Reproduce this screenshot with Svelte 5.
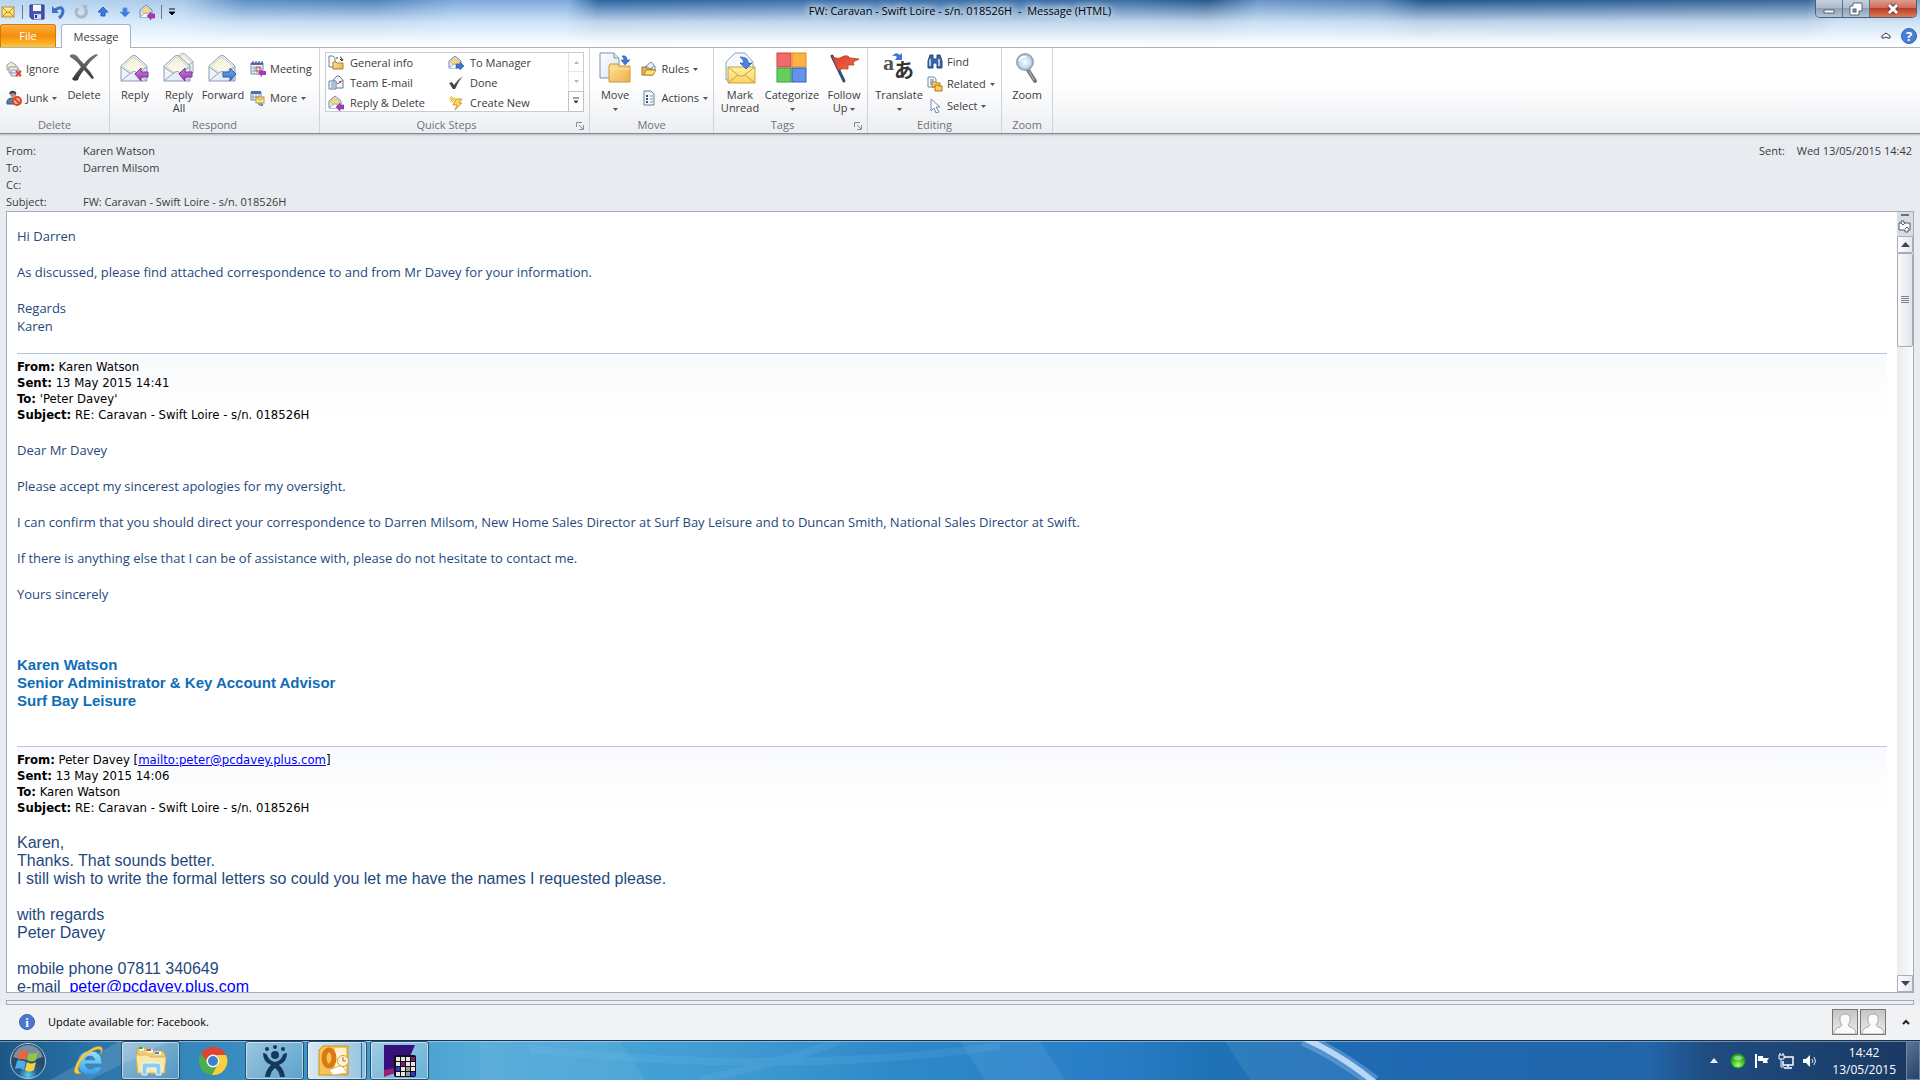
<script lang="ts">
  type Step = { icon: string; label: string };

  const quickSteps: Step[] = [
    { icon: 'general', label: 'General info' },
    { icon: 'to-manager', label: 'To Manager' },
    { icon: 'team', label: 'Team E-mail' },
    { icon: 'done', label: 'Done' },
    { icon: 'reply-delete', label: 'Reply & Delete' },
    { icon: 'create', label: 'Create New' },
  ];

  const headers = [
    ['From:', 'Karen Watson'],
    ['To:', 'Darren Milsom'],
    ['Cc:', ''],
    ['Subject:', 'FW: Caravan - Swift Loire - s/n. 018526H'],
  ];
</script>

{#snippet envelope()}
  <path d="M1 12 L12 2 Q14 1 16 2 L27 12 V27 H1Z" fill="url(#paper)" stroke="#8a9bb0" />
  <path d="M3 13 L12 4 Q14 3 16 4 L25 13 L14 20Z" fill="url(#cream)" stroke="#c3c3b4" stroke-width=".7" />
  <path d="M1 13 L11 20 M27 13 L17 20 M1 27 L12 18 Q14 17 16 18 L27 27" fill="none" stroke="#93a5b9" />
{/snippet}

{#snippet smallEnvelope()}
  <path d="M1 6 L7 1 L13 6 V13 H1Z" fill="#e3edf8" stroke="#6d88ad" />
  <path d="M3 6 L7 3 L11 6 V8 L7 10 L3 8Z" fill="#f9d985" stroke="#d8ad45" stroke-width=".6" />
  <path d="M1 13 L6 9 H8 L13 13" fill="#f5f9fe" stroke="#7d96b8" stroke-width=".8" />
{/snippet}

{#snippet caret()}
  <svg class="caret" viewBox="0 0 5 3" aria-hidden="true"><path d="M0 0H5L2.5 3Z" fill="#555" /></svg>
{/snippet}

{#snippet large(name: string)}
  <svg class="icon32" viewBox="0 0 32 32" aria-hidden="true">
    {#if name === 'delete'}
      <path d="M2 3 Q6 1 9 4 Q12 8 16 12 Q21 5 28 2 L30 3 Q23 8 18 15 Q23 20 26 26 L24 27 Q20 22 16 18 Q11 24 10 28 Q6 30 4 27 Q8 21 13 15 Q8 8 2 5Z" fill="url(#dark)" />
    {:else if name === 'reply'}
      <g transform="translate(1 2)">{@render envelope()}</g>
      <path d="M16 22 L22 16 V20 H29 V25 H22 V29Z" fill="url(#purple)" stroke="#7c3796" />
    {:else if name === 'reply-all'}
      <g transform="translate(9 0) scale(.78)">{@render envelope()}</g>
      <g transform="translate(0 2)">{@render envelope()}</g>
      <path d="M16 22 L22 16 V20 H29 V25 H22 V29Z" fill="url(#purple)" stroke="#7c3796" />
    {:else if name === 'forward'}
      <g transform="translate(1 2)">{@render envelope()}</g>
      <path d="M29 22 L23 16 V20 H16 V25 H23 V29Z" fill="url(#blue)" stroke="#315ca9" />
    {:else if name === 'move'}
      <path d="M1 1 H15 L20 6 V26 H1Z" fill="url(#paper)" stroke="#7c91ad" />
      <path d="M15 1 V6 H20" fill="#dce7f3" stroke="#7c91ad" />
      <path d="M10 14 L11 12 H19 L20 14 H31 V30 H10Z" fill="url(#gold)" stroke="#c99638" />
      <path d="M10 17 H31" stroke="#ffe7a3" />
      <path d="M23 4 Q28 3 28 8 H31 L26 13 L22 8 H25 Q25 6 23 4Z" fill="#3f78d0" stroke="#285aae" stroke-width=".6" />
    {:else if name === 'unread'}
      <path d="M2 10 L11 1 H21 L29 10 V28 H2Z" fill="#f5f9fd" stroke="#8ba1bd" />
      <path d="M4 15 H31 V31 H4Z" fill="url(#yellow)" stroke="#c9a13d" />
      <path d="M4 15 L15 24 H19 L31 15 M4 31 L14 23 M31 31 L21 23" fill="none" stroke="#c9a13d" />
      <path d="M16 5 Q25 5 24 11 H28 L22 17 L16 11 H20 Q20 8 16 5Z" fill="#4a83da" stroke="#2458ac" stroke-width=".7" />
    {:else if name === 'categorize'}
      <rect x="1" y="1" width="14" height="14" fill="#f2696c" stroke="#d23f44" />
      <rect x="16" y="1" width="14" height="14" fill="#fbb343" stroke="#dd8d24" />
      <rect x="1" y="16" width="14" height="14" fill="#65cf5c" stroke="#36a437" />
      <rect x="16" y="16" width="14" height="14" fill="#6592ea" stroke="#365fbe" />
    {:else if name === 'flag'}
      <path d="M4 4 L16 29" stroke="#33547f" stroke-width="3" stroke-linecap="round" />
      <path d="M4 4 Q9 8 14 5 Q19 2 22 6 L31 7 L25 10 L26 13 L20 13 L20 17 Q15 16 10 18Z" fill="url(#red)" stroke="#b83823" stroke-width=".8" />
    {:else if name === 'translate'}
      <text x="0" y="18" font-family="Liberation Serif, serif" font-size="22" font-weight="bold" fill="#555">a</text>
      <text x="11" y="26" font-family="Noto Sans CJK JP, sans-serif" font-size="20" font-weight="bold" fill="#333">あ</text>
      <path d="M9 4 Q13 -1 17 3 L19 1 V8 H12 L14 5 Q12 3 9 4Z" fill="#3d75cf" />
    {:else if name === 'zoom'}
      <path d="M17 18 L24 29" stroke="#777" stroke-width="4" stroke-linecap="round" />
      <path d="M18 19 L23 28" stroke="#c3c3c3" />
      <circle cx="14" cy="10" r="8" fill="url(#lens)" stroke="#9da8b5" stroke-width="2" />
      <path d="M8 9 Q10 4 15 5" fill="none" stroke="#fff" stroke-width="2" />
    {/if}
  </svg>
{/snippet}

{#snippet small(name: string)}
  <svg class="icon16" viewBox="0 0 16 16" aria-hidden="true">
    {#if name === 'ignore'}
      <path d="M1 4 L5 1 L10 4 V9 H1Z" fill="#f5ecd1" stroke="#aaa28c" />
      <path d="M3 6 H12 V12 H3Z M5 9 H14 V15 H5Z" fill="#eaf0f5" stroke="#8999a8" />
      <path d="M10 10 L15 15 M15 10 L10 15" stroke="#e14735" stroke-width="2" />
    {:else if name === 'junk'}
      <circle cx="7" cy="4" r="3" fill="#b78b69" />
      <path d="M3 4 Q4 0 8 1 Q11 2 10 5 L8 3Z" fill="#34465d" />
      <path d="M1 14 V11 Q2 8 6 8 Q10 8 11 11 V14Z" fill="#587cac" stroke="#37557d" />
      <circle cx="11" cy="11" r="4" fill="#f7b49e" stroke="#dc4629" stroke-width="2" />
      <path d="M8 8 L14 14" stroke="#dc4629" stroke-width="2" />
    {:else if name === 'meeting'}
      <path d="M1 2 H13 V13 H1Z" fill="#f8fafd" stroke="#7187aa" />
      <path d="M1 2 H13 V4 H1Z" fill="#4c72b2" />
      <path d="M3 0 V3 M6 0 V3 M9 0 V3 M12 0 V3" stroke="#334d7b" />
      <path d="M4 5 V13 M7 5 V13 M10 5 V13 M1 7 H13 M1 10 H13" stroke="#9bacc6" />
      <rect x="6" y="6" width="4" height="4" fill="none" stroke="#df5146" />
      <path d="M8 12 L12 8 V10 H16 V14 H12 V16Z" fill="#a339be" />
    {:else if name === 'more'}
      <path d="M1 2 H11 V10 H1Z" fill="#f8fafd" stroke="#7187aa" />
      <path d="M1 1 H11 V4 H1Z" fill="#4c72b2" />
      <path d="M3 4 V10 M6 4 V10 M9 4 V10 M1 7 H11" stroke="#8ba0c0" />
      <rect x="6" y="7" width="8" height="6" fill="#ffe38c" stroke="#c0993d" />
      <path d="M6 7 L10 10 L14 7" fill="none" stroke="#c0993d" />
      <path d="M9 13 V15 H12 M11 13 L13 15 L11 16" fill="none" stroke="#3263ae" />
    {:else if name === 'general'}
      <path d="M1 1 H5 L7 3 V12 H1Z" fill="#fff" stroke="#6e7e93" />
      <path d="M5 7 H8 L9 8 H15 V14 H5Z" fill="url(#gold)" stroke="#ad8028" />
      <path d="M8 3 H10 M12 2 Q14 2 14 5 M12 4 L14 6 L15 4" fill="none" stroke="#333" />
    {:else if name === 'to-manager'}
      {@render smallEnvelope()}
      <path d="M16 11 L12 7 V9 H8 V13 H12 V15Z" fill="#3b75cd" stroke="#2859a6" stroke-width=".6" />
    {:else if name === 'team'}
      <path d="M5 5 L9 1 H11 L15 5 V13 H5Z" fill="#f3f7fc" stroke="#5e789d" />
      <path d="M5 5 L10 9 L15 5" fill="none" stroke="#5e789d" />
      <rect x="11" y="6" width="2" height="2" fill="#d6472d" />
      <path d="M1 6 H8 V14 H1Z" fill="#eef5ff" stroke="#647f9f" />
      <path d="M3 8 H7 M3 10 H7 M3 12 H7" stroke="#6a88af" />
    {:else if name === 'done'}
      <path d="M1 8 L4 7 L6 10 Q10 4 15 1 Q10 7 7 14 H5Z" fill="url(#dark)" />
    {:else if name === 'reply-delete'}
      {@render smallEnvelope()}
      <path d="M8 12 L12 8 V10 H16 V14 H12 V16Z" fill="#a339be" stroke="#71298c" stroke-width=".5" />
    {:else if name === 'create'}
      <path d="M4 1 V8 M1 4 H8 M2 2 L7 7 M7 2 L2 7" stroke="#f1bb2c" />
      <path d="M8 4 H14 L11 8 H14 L7 15 L9 10 H5Z" fill="#ffd55a" stroke="#c28c21" stroke-width=".8" />
    {:else if name === 'rules'}
      <path d="M4 6 L10 1 L14 5 V9 H4Z" fill="#e9f2fb" stroke="#728ba8" />
      <path d="M5 5 L9 8 L13 5" fill="none" stroke="#728ba8" />
      <path d="M1 6 H5 L6 8 H12 V14 H1Z" fill="#e7b54c" stroke="#a77722" />
      <path d="M3 14 L5 9 H15 L12 14Z" fill="#ffe17e" stroke="#b7862a" />
    {:else if name === 'actions'}
      <path d="M3 1 H10 L13 4 V15 H3Z" fill="#f4f8fc" stroke="#6c7e94" />
      <path d="M5 6 H7 M5 9 H7 M5 12 H7" stroke="#31527d" stroke-width="2" />
      <path d="M9 6 H12 M9 9 H12 M9 12 H12" stroke="#8191a5" />
    {:else if name === 'find'}
      <path d="M2 4 L3 1 H6 V5 H10 V1 H13 L15 7 V14 H10 V9 H6 V14 H1 V7Z" fill="#3c66a7" stroke="#244579" />
      <path d="M3 5 V12 M12 5 V12" stroke="#afc7ec" stroke-width="2" />
    {:else if name === 'related'}
      <path d="M1 1 H7 L9 3 V11 H1Z" fill="#fff" stroke="#6f87a9" />
      <path d="M3 4 H7 M3 6 H7 M3 8 H7" stroke="#4b78b6" />
      <path d="M5 6 H9 L10 7 H13 V11 H5Z" fill="#ffcd53" stroke="#a97921" />
      <path d="M8 9 H11 L12 10 H15 V15 H8Z" fill="#ffcd53" stroke="#a97921" />
    {:else if name === 'select'}
      <path d="M4 1 V13 L7 10 L9 15 L12 14 L9 9 H13Z" fill="#f8fbff" stroke="#758fae" />
    {/if}
  </svg>
{/snippet}

{#snippet launcher()}
  <button class="launcher" aria-label="More options">
    <svg width="8" height="8" viewBox="0 0 8 8"><path d="M.5 5 V.5 H6 M3 3 L7 7 M7.5 3 V7.5 H3" fill="none" stroke="#888c92" /></svg>
  </button>
{/snippet}

<svg class="defs" width="0" height="0" aria-hidden="true">
  <defs>
    <linearGradient id="paper" x2="1" y2="1"><stop stop-color="#fff" /><stop offset="1" stop-color="#d8e5f3" /></linearGradient>
    <linearGradient id="cream" x2="0" y2="1"><stop stop-color="#f3efd2" /><stop offset="1" stop-color="#fdfcf3" /></linearGradient>
    <linearGradient id="dark" x2="0" y2="1"><stop stop-color="#777" /><stop offset="1" stop-color="#333" /></linearGradient>
    <linearGradient id="purple" x2="0" y2="1"><stop stop-color="#cd7ee0" /><stop offset="1" stop-color="#9437b0" /></linearGradient>
    <linearGradient id="blue" x2="0" y2="1"><stop stop-color="#75aaf0" /><stop offset="1" stop-color="#356fc9" /></linearGradient>
    <linearGradient id="gold" x2="1" y2="1"><stop stop-color="#ffe29a" /><stop offset="1" stop-color="#edb04a" /></linearGradient>
    <linearGradient id="yellow" x2="0" y2="1"><stop stop-color="#fff1a3" /><stop offset="1" stop-color="#fbd45f" /></linearGradient>
    <linearGradient id="red" x2="1" y2="1"><stop stop-color="#d93c26" /><stop offset="1" stop-color="#f16d4d" /></linearGradient>
    <linearGradient id="ie" x2="0" y2="1"><stop stop-color="#9fe0ff" /><stop offset="1" stop-color="#2f9fe6" /></linearGradient>
    <radialGradient id="lens"><stop stop-color="#fff" /><stop offset="1" stop-color="#a9cdf2" /></radialGradient>
    <radialGradient id="orb" cy=".9"><stop stop-color="#59d1f3" /><stop offset=".5" stop-color="#23628f" /><stop offset="1" stop-color="#284a69" /></radialGradient>
    <radialGradient id="green" cy=".8"><stop stop-color="#a4ff74" /><stop offset="1" stop-color="#31b51f" /></radialGradient>
    <linearGradient id="sky" x2="1"><stop stop-color="#1c5787" /><stop offset=".05" stop-color="#2a75ab" /><stop offset=".1" stop-color="#3488bb" /><stop offset=".19" stop-color="#4499ca" /><stop offset=".25" stop-color="#55aad8" /><stop offset=".32" stop-color="#46a3d5" /><stop offset=".4" stop-color="#3c97d0" /><stop offset=".47" stop-color="#2e88c8" /><stop offset=".57" stop-color="#297fc7" /><stop offset=".63" stop-color="#2072b6" /><stop offset=".74" stop-color="#1f68b1" /><stop offset=".86" stop-color="#2265a8" /><stop offset=".89" stop-color="#204c80" /><stop offset="1" stop-color="#193862" /></linearGradient>
  </defs>
</svg>

<div class="screen">
  <header class="titlebar">
    <div class="title-row">
      <div class="quick-access">
        <button aria-label="Message window">
          <svg width="16" height="16" viewBox="0 0 16 16"><rect x="2" y="3" width="12" height="10" fill="url(#yellow)" stroke="#b78c31" /><path d="M2 3 L8 9 L14 3 M2 13 L7 8 M14 13 L9 8" fill="none" stroke="#b78c31" /></svg>
        </button>
        <span class="bar"></span>
        <button aria-label="Save">
          <svg width="16" height="16" viewBox="0 0 16 16"><path d="M1 1 H15 V15 H3 L1 13Z" fill="#4754b8" stroke="#2b327f" /><path d="M4 1 H12 V7 H4Z" fill="#f7f9ff" /><path d="M5 10 H12 V15 H5Z" fill="#d5daf1" /><path d="M6 11 H8 V14 H6Z" fill="#2d3688" /></svg>
        </button>
        <button aria-label="Undo">
          <svg width="16" height="16" viewBox="0 0 16 16"><path d="M4 6 Q11 1 12 7 Q12 11 8 14" fill="none" stroke="#3d71c7" stroke-width="3" /><path d="M1 2 V9 H8Z" fill="#3d71c7" /></svg>
        </button>
        <button aria-label="Redo">
          <svg width="16" height="16" viewBox="0 0 16 16"><path d="M5 4 Q1 9 5 12 Q10 15 13 10 Q14 7 12 4" fill="none" stroke="#aeb6bf" stroke-width="3" /><path d="M8 1 H14 V7Z" fill="#aeb6bf" /></svg>
        </button>
        <button aria-label="Previous item">
          <svg width="16" height="16" viewBox="0 0 16 16"><path d="M8 3 L13 8 H10 V12 H6 V8 H3Z" fill="#3c7ae1" stroke="#2b61c2" /></svg>
        </button>
        <button aria-label="Next item">
          <svg width="16" height="16" viewBox="0 0 16 16"><path d="M8 13 L13 8 H10 V4 H6 V8 H3Z" fill="#3c7ae1" stroke="#659ce8" /></svg>
        </button>
        <button aria-label="Reply and delete">{@render small('reply-delete')}</button>
        <span class="bar"></span>
        <button aria-label="Customize toolbar">
          <svg width="8" height="8" viewBox="0 0 8 8"><path d="M1 1H7M1 4H7L4 7Z" stroke="#111" /></svg>
        </button>
      </div>
      <h1>FW: Caravan - Swift Loire - s/n. 018526H&nbsp; -&nbsp; Message (HTML)</h1>
      <div class="window-controls">
        <button aria-label="Minimize"><svg width="14" height="12" viewBox="0 0 14 12"><rect x="2" y="7" width="10" height="3" fill="#fff" stroke="#596779" /></svg></button>
        <button aria-label="Restore"><svg width="14" height="14" viewBox="0 0 14 14"><path d="M4 1 H13 V9 H10 V13 H1 V4 H4Z" fill="#fff" stroke="#596779" /><rect x="4" y="7" width="3" height="3" fill="#8495a9" stroke="#596779" /></svg></button>
        <button class="close" aria-label="Close"><svg width="14" height="12" viewBox="0 0 14 12"><path d="M3 2 L11 10 M11 2 L3 10" stroke="#6f3a36" stroke-width="5" /><path d="M3 2 L11 10 M11 2 L3 10" stroke="#fff" stroke-width="3" /></svg></button>
      </div>
    </div>
    <nav class="tabs">
      <button class="file">File</button>
      <button class="tab">Message</button>
      <span class="grow"></span>
      <button class="plain" aria-label="Minimize the ribbon"><svg width="10" height="8" viewBox="0 0 10 8"><path d="M1 6 V4 L5 1 L9 4 V6 H7 L5 5 L3 6Z" fill="#fff" stroke="#333" /></svg></button>
      <button class="plain" aria-label="Help">
        <svg width="16" height="16" viewBox="0 0 16 16"><circle cx="8" cy="8" r="7.5" fill="#4b7fd4" stroke="#3560ad" /><text x="8" y="12.5" text-anchor="middle" font-family="Open Sans, sans-serif" font-size="13" font-weight="bold" fill="#fff">?</text></svg>
      </button>
    </nav>
  </header>

  <div class="ribbon">
    <section class="group delete">
      <div class="tools">
        <div class="stack two">
          <button class="small">{@render small('ignore')}Ignore</button>
          <button class="small">{@render small('junk')}Junk{@render caret()}</button>
        </div>
        <button class="large">{@render large('delete')}Delete</button>
      </div>
      <h2>Delete</h2>
    </section>
    <section class="group respond">
      <div class="tools">
        <button class="large">{@render large('reply')}Reply</button>
        <button class="large">{@render large('reply-all')}Reply<br />All</button>
        <button class="large">{@render large('forward')}Forward</button>
        <div class="stack two">
          <button class="small">{@render small('meeting')}Meeting</button>
          <button class="small">{@render small('more')}More{@render caret()}</button>
        </div>
      </div>
      <h2>Respond</h2>
    </section>
    <section class="group steps">
      <div class="tools">
        <div class="gallery">
          <div class="gallery-items">
            {#each quickSteps as step}
              <button class="small">{@render small(step.icon)}{step.label}</button>
            {/each}
          </div>
          <div class="gallery-scroll">
            <button aria-label="Row up"><svg width="5" height="3" viewBox="0 0 5 3"><path d="M0 3H5L2.5 0Z" fill="#b5b9be" /></svg></button>
            <button aria-label="Row down"><svg width="5" height="3" viewBox="0 0 5 3"><path d="M0 0H5L2.5 3Z" fill="#b5b9be" /></svg></button>
            <button class="expand" aria-label="More quick steps"><svg width="8" height="8" viewBox="0 0 8 8"><path d="M1 1H7M2 4H6L4 6Z" fill="#444" stroke="#444" /></svg></button>
          </div>
        </div>
      </div>
      <h2>Quick Steps</h2>
      {@render launcher()}
    </section>
    <section class="group move">
      <div class="tools">
        <button class="large">{@render large('move')}Move<br />{@render caret()}</button>
        <div class="stack two">
          <button class="small">{@render small('rules')}Rules{@render caret()}</button>
          <button class="small">{@render small('actions')}Actions{@render caret()}</button>
        </div>
      </div>
      <h2>Move</h2>
    </section>
    <section class="group tags">
      <div class="tools">
        <button class="large">{@render large('unread')}Mark<br />Unread</button>
        <button class="large wide">{@render large('categorize')}Categorize<br />{@render caret()}</button>
        <button class="large">{@render large('flag')}Follow<br />Up {@render caret()}</button>
      </div>
      <h2>Tags</h2>
      {@render launcher()}
    </section>
    <section class="group editing">
      <div class="tools">
        <button class="large wide">{@render large('translate')}Translate<br />{@render caret()}</button>
        <div class="stack">
          <button class="small">{@render small('find')}Find</button>
          <button class="small">{@render small('related')}Related{@render caret()}</button>
          <button class="small">{@render small('select')}Select{@render caret()}</button>
        </div>
      </div>
      <h2>Editing</h2>
    </section>
    <section class="group zoom">
      <div class="tools">
        <button class="large">{@render large('zoom')}Zoom</button>
      </div>
      <h2>Zoom</h2>
    </section>
  </div>

  <div class="envelope-info">
    <dl>
      {#each headers as [name, value]}
        <dt>{name}</dt>
        <dd>{value}</dd>
      {/each}
    </dl>
    <p><span>Sent:</span><span>Wed 13/05/2015 14:42</span></p>
  </div>

  <main class="reader">
    <article class="message">
      <div class="calibri">
        <p>Hi Darren</p>
        <p>As discussed, please find attached correspondence to and from Mr Davey for your information.</p>
        <p>Regards<br />Karen</p>
      </div>
      <div class="quoted">
        <b>From:</b> Karen Watson<br />
        <b>Sent:</b> 13 May 2015 14:41<br />
        <b>To:</b> 'Peter Davey'<br />
        <b>Subject:</b> RE: Caravan - Swift Loire - s/n. 018526H
      </div>
      <div class="calibri">
        <p>Dear Mr Davey</p>
        <p>Please accept my sincerest apologies for my oversight.</p>
        <p>I can confirm that you should direct your correspondence to Darren Milsom, New Home Sales Director at Surf Bay Leisure and to Duncan Smith, National Sales Director at Swift.</p>
        <p>If there is anything else that I can be of assistance with, please do not hesitate to contact me.</p>
        <p>Yours sincerely</p>
      </div>
      <p class="signature">Karen Watson<br />Senior Administrator &amp; Key Account Advisor<br />Surf Bay Leisure</p>
      <div class="quoted">
        <b>From:</b> Peter Davey [<a href="mailto:peter@pcdavey.plus.com">mailto:peter@pcdavey.plus.com</a>]<br />
        <b>Sent:</b> 13 May 2015 14:06<br />
        <b>To:</b> Karen Watson<br />
        <b>Subject:</b> RE: Caravan - Swift Loire - s/n. 018526H
      </div>
      <div class="arial">
        <p>Karen,<br />Thanks. That sounds better.<br />I still wish to write the formal letters so could you let me have the names I requested please.</p>
        <p>with regards<br />Peter Davey</p>
        <p>mobile phone 07811 340649<br />e-mail&nbsp; <a href="mailto:peter@pcdavey.plus.com">peter@pcdavey.plus.com</a></p>
      </div>
    </article>
    <div class="scrollbar">
      <span class="split"></span>
      <button class="ruler" aria-label="View ruler"><svg width="14" height="14" viewBox="0 0 14 14"><path d="M1 3 H3 V1 H6 V3 H12 V10 H10 V12 H7 V10 H1Z" fill="#f8f9fb" stroke="#555d69" /><path d="M3 3 L5 5 L7 3 M7 9 L9 7 L11 9" fill="none" stroke="#555d69" /></svg></button>
      <button class="arrow" aria-label="Scroll up"><svg width="9" height="5" viewBox="0 0 9 5"><path d="M0 5H9L4.5 0Z" fill="#3c435a" /></svg></button>
      <div class="track"><div class="thumb"></div></div>
      <button class="arrow" aria-label="Scroll down"><svg width="9" height="5" viewBox="0 0 9 5"><path d="M0 0H9L4.5 5Z" fill="#3c435a" /></svg></button>
    </div>
  </main>

  <div class="splitter"></div>

  <footer class="people">
    <svg width="16" height="16" viewBox="0 0 16 16" aria-hidden="true"><circle cx="8" cy="8" r="7.5" fill="#4778cf" stroke="#3b64b0" /><text x="8" y="12.5" text-anchor="middle" font-family="Liberation Serif, serif" font-size="13" font-weight="bold" fill="#fff">i</text></svg>
    <span>Update available for: Facebook.</span>
    <div class="faces">
      {#each [1, 2] as n}
        <button aria-label="Contact {n}">
          <svg width="24" height="24" viewBox="0 0 24 24"><path d="M1 24 Q1 18 7 17 L9 15 Q6 12 7 8 Q7 4 12 4 Q17 4 17 8 Q18 12 15 15 L17 17 Q23 18 23 24Z" fill="#fafafa" stroke="#a8a8a8" /></svg>
        </button>
      {/each}
    </div>
    <button class="plain" aria-label="Expand people pane"><svg width="8" height="6" viewBox="0 0 8 6"><path d="M1 5 L4 2 L7 5" fill="none" stroke="#222" stroke-width="2" /></svg></button>
  </footer>

  <div class="taskbar">
    <svg class="wallpaper" viewBox="0 0 1920 40" preserveAspectRatio="none" aria-hidden="true">
      <rect width="1920" height="40" fill="url(#sky)" />
      <path d="M50 40 L120 0 H170 L90 40Z" fill="#fff" opacity=".13" />
      <path d="M480 0 H620 L645 40 H480Z M960 0 H1040 L1065 40 H985Z M1225 0 H1305 L1365 40 H1250Z" fill="#8bc9ee" opacity=".14" />
      <path d="M530 8 Q790 36 1000 5 M700 40 Q780 22 840 0" fill="none" stroke="#8fd0f4" stroke-width="8" opacity=".12" />
      <path d="M1304 -2 Q1340 15 1374 42" fill="none" stroke="#79b2e8" stroke-width="14" opacity=".5" />
      <path d="M1306 -2 Q1342 15 1374 42" fill="none" stroke="#cae5fc" stroke-width="6" opacity=".85" />
      <rect width="1920" height="1" fill="#fff" opacity=".4" />
    </svg>
    <div class="apps">
      <button class="start" aria-label="Start">
        <svg width="38" height="38" viewBox="0 0 38 38"><circle cx="19" cy="19" r="17.5" fill="url(#orb)" stroke="#a9c9dc" /><path d="M4 15 Q8 3 19 3 Q30 3 34 15 Q19 20 4 15Z" fill="#fff" opacity=".38" /><path d="M10 10 Q14 7 19 10 L17 18 Q13 15 9 18Z" fill="#ef6335" /><path d="M20 11 Q25 13 29 10 L27 18 Q23 21 18 18Z" fill="#91c83e" /><path d="M8 19 Q12 17 17 20 L15 28 Q11 25 6 27Z" fill="#4baee5" /><path d="M18 20 Q22 23 27 20 L25 28 Q20 31 16 28Z" fill="#fbd13e" /></svg>
      </button>
      <button class="task" aria-label="Internet Explorer">
        <svg width="32" height="32" viewBox="0 0 32 32"><path d="M29 19 H12 Q13 24 18 24 Q21 24 22 22 H29 Q26 30 17 30 Q5 29 5 18 Q6 6 17 6 Q29 6 29 19Z M12 15 H22 Q21 11 17 11 Q13 11 12 15Z" fill="url(#ie)" fill-rule="evenodd" stroke="#2f86c4" stroke-width=".7" /><path d="M8 28 Q0 31 2 23 Q5 12 15 6 Q26 -1 29 3 Q30 5 28 9 Q29 4 25 4 Q15 6 8 16 Q2 26 8 28Z" fill="#f8d13f" stroke="#d6a521" stroke-width=".6" /></svg>
      </button>
      <button class="task open" aria-label="Windows Explorer">
        <svg width="32" height="32" viewBox="0 0 32 32"><path d="M2 5 Q2 3 4 3 H10 L12 6 H28 L30 9 V28 H2Z" fill="#edcf73" stroke="#c6a24b" /><path d="M5 4 H9 M12 6 H18 M20 8 H26" stroke="#fff" stroke-width="3" /><path d="M4 3 H8" stroke="#37ad52" stroke-width="2" /><path d="M12 5 H16" stroke="#db4c38" stroke-width="2" /><path d="M20 8 H24" stroke="#3d8ddb" stroke-width="2" /><path d="M1 10 H13 L15 12 H31 L29 28 H3Z" fill="#fae8a8" stroke="#d6b965" /><path d="M7 30 V21 Q7 18 10 18 H23 Q26 18 26 21 V30 H21 V23 H12 V30Z" fill="#8dcdf0" stroke="#e9faff" /></svg>
      </button>
      <button class="task" aria-label="Chrome">
        <svg width="30" height="30" viewBox="0 0 30 30"><circle cx="15" cy="15" r="14" fill="#4bae4f" /><path d="M3 8 A14 14 0 0 1 28 9 L15 9 A6 6 0 0 0 9 15Z" fill="#db4437" /><path d="M28 9 A14 14 0 0 1 14 29 L20 18 A6 6 0 0 0 18 9Z" fill="#f8cf3c" /><circle cx="15" cy="15" r="6.5" fill="#f8f8f8" /><circle cx="15" cy="15" r="5" fill="#417fca" /></svg>
      </button>
      <button class="task open" aria-label="Helpdesk">
        <svg width="28" height="34" viewBox="0 0 28 34"><g fill="#16385d"><circle cx="6" cy="5" r="2" /><circle cx="14" cy="3" r="2" /><circle cx="22" cy="5" r="2" /><circle cx="14" cy="11" r="4" /><path d="M2 9 Q6 9 7 13 Q9 17 14 18 Q19 17 21 13 Q22 9 26 9 Q26 18 18 21 Q23 25 24 33 H19 Q18 27 14 24 Q10 27 9 33 H4 Q5 25 10 21 Q2 18 2 9Z" /></g></svg>
      </button>
      <button class="task open active" aria-label="Outlook">
        <svg width="32" height="32" viewBox="0 0 32 32"><path d="M5 1 H30 V30 H1 V5Z" fill="#f7c553" stroke="#cf921f" /><path d="M17 3 H28 V28 H17Z" fill="#fff4cd" /><ellipse cx="11" cy="13" rx="5" ry="8" fill="none" stroke="#dc7812" stroke-width="5" /><path d="M11 25 L24 20 L29 28 L15 30Z" fill="#fff" stroke="#d9b77a" /><circle cx="25" cy="16" r="5.5" fill="#fff4d7" stroke="#d69b39" /><path d="M25 12 V16 H28" fill="none" stroke="#a06d25" /></svg>
      </button>
      <button class="task open" aria-label="Console">
        <svg width="34" height="34" viewBox="0 0 34 34"><path d="M1 1 H32 L25 17 L12 28 L1 32Z" fill="#35127b" /><path d="M1 26 L12 24 V29 L1 33Z" fill="#962177" /><rect x="11" y="11" width="22" height="22" rx="2" fill="#111" /><path d="M13 13h4v4h-4zM18 13h4v4h-4zM23 13h4v4h-4zM13 18h4v4h-4zM23 18h4v4h-4zM28 18h4v4h-4zM18 23h4v4h-4zM28 23h4v4h-4zM13 28h4v4h-4zM18 28h4v4h-4z" fill="#e6e6e6" /><path d="M28 13h4v4h-4zM18 18h4v4h-4z" fill="#811b79" /><path d="M13 23h4v4h-4zM28 28h4v4h-4z" fill="#2937d0" /><path d="M23 23h4v4h-4zM23 28h4v4h-4z" fill="#9b9b9b" /></svg>
      </button>
    </div>
    <div class="tray">
      <button class="hidden-icons" aria-label="Show hidden icons"><svg width="8" height="5" viewBox="0 0 8 5"><path d="M0 5H8L4 0Z" fill="#e8f1fa" /></svg></button>
      <button aria-label="Status"><svg width="16" height="16" viewBox="0 0 16 16"><circle cx="8" cy="8" r="7" fill="url(#green)" stroke="#249919" /><ellipse cx="8" cy="5" rx="4" ry="2" fill="#fff" opacity=".45" /></svg></button>
      <button aria-label="Action Center"><svg width="16" height="16" viewBox="0 0 16 16"><path d="M2 1 V15" stroke="#fff" stroke-width="2" /><path d="M4 3 H9 V5 H15 L13 8 L14 10 H9 V8 H4Z" fill="#fff" /></svg></button>
      <button aria-label="Network"><svg width="16" height="16" viewBox="0 0 16 16"><path d="M6 4 H15 V12 H5 V8 M10 12 V14 M6 15 H14" fill="none" stroke="#fff" stroke-width="1.5" /><path d="M1 2 H6 V6 H1Z M3 6 V14 H6 M2 0 V2 M5 0 V2" fill="none" stroke="#fff" /></svg></button>
      <button aria-label="Volume"><svg width="16" height="16" viewBox="0 0 16 16"><path d="M1 6 H4 L8 2 V14 L4 10 H1Z" fill="#fff" /><path d="M10 6 Q12 8 10 10 M12 4 Q15 8 12 12" fill="none" stroke="#dce9f7" /></svg></button>
      <button class="clock">14:42<br />13/05/2015</button>
      <button class="show-desktop" aria-label="Show desktop"></button>
    </div>
  </div>
</div>

<style>
  :global(body) {
    margin: 0;
  }

  .screen {
    height: 100vh;
    display: flex;
    flex-direction: column;
    overflow: hidden;
    background: #e8ebf0;
    color: #3b3b3b;
    font: 11px/14px 'Open Sans', 'Noto Sans', sans-serif;
  }

  .defs {
    position: absolute;
  }

  button {
    padding: 0;
    border: 0;
    background: none;
    color: inherit;
    font: inherit;
  }

  svg {
    display: block;
    flex: none;
  }

  h1,
  h2,
  p,
  dl,
  dd {
    margin: 0;
    font-size: inherit;
    font-weight: normal;
  }

  .grow {
    flex: 1;
  }

  .titlebar {
    background:
      linear-gradient(180deg, transparent 0, rgba(226, 241, 255, 0.8) 22px, #fbfdff 44px),
      linear-gradient(100deg, #b9d5ef 0, #a8c9e9 180px, #5d8fc4 240px, #4f83bb 370px, #7eaadc 450px, #7eaadc 560px, #2e64a2 590px, #3b70ab 790px, #3a6da4 1120px, #27588c 1190px, #6a96c6 1240px, #5685b9 1360px, #24588f 1400px, #3a699b 1780px, #8baccc 1815px, #7fa5cf 100%);
    border-bottom: 1px solid #aeb3bb;
  }

  .title-row {
    height: 24px;
    display: grid;
    grid-template-columns: 1fr auto 1fr;
  }

  .quick-access {
    display: flex;
    align-items: center;
    gap: 6px;
  }

  .bar {
    width: 1px;
    height: 14px;
    background: #6c7c90;
  }

  .quick-access .icon16 {
    margin: 0;
  }

  h1 {
    color: #000;
    line-height: 22px;
    text-shadow: 0 0 6px #dcebfa, 0 0 8px #dcebfa, 0 0 10px #dcebfa;
  }

  .window-controls {
    justify-self: end;
    display: flex;
    height: 17px;
    margin-right: 3px;
    border: 1px solid #4c6079;
    border-top: 0;
    border-radius: 0 0 5px 5px;
    overflow: hidden;
  }

  .window-controls button {
    width: 27px;
    display: flex;
    align-items: center;
    justify-content: center;
    border-right: 1px solid #5d7089;
    background: linear-gradient(#c5d1df 0, #aebccd 45%, #8fa0b5 50%, #b4c5d9 100%);
  }

  .window-controls .close {
    width: 46px;
    border-right: 0;
    background: linear-gradient(#dd9d8f 0, #cf6f5c 45%, #bb3d26 50%, #d97b58 100%);
  }

  .tabs {
    height: 23px;
    display: flex;
    align-items: stretch;
    gap: 5px;
    padding-right: 3px;
  }

  .file {
    width: 56px;
    border: 1px solid #d07a08;
    border-bottom: 0;
    border-radius: 3px 3px 0 0;
    background: linear-gradient(#fbb03c, #f68d0b 50%, #ffc638);
    color: #fff;
  }

  .tab {
    position: relative;
    z-index: 1;
    width: 70px;
    margin-bottom: -1px;
    border: 1px solid #a9b4c2;
    border-bottom: 0;
    border-radius: 3px 3px 0 0;
    background: #fff;
  }

  .plain {
    display: flex;
    align-items: center;
    margin-left: 5px;
  }

  .ribbon {
    display: flex;
    height: 85px;
    background: linear-gradient(#fff 0, #fff 40%, #eceef1 100%);
    border-bottom: 1px solid #85898f;
    box-shadow: 0 1px 2px #b4b9c1;
  }

  .group {
    position: relative;
    display: flex;
    flex-direction: column;
    box-sizing: border-box;
    border-right: 1px solid #d0d3d8;
  }

  .group h2 {
    height: 15px;
    color: #6d737c;
    text-align: center;
  }

  .steps h2,
  .tags h2 {
    padding-right: 16px;
  }

  .tools {
    flex: 1;
    display: flex;
    padding: 4px 5px 0;
  }

  .delete { width: 110px; }
  .respond { width: 210px; }
  .steps { width: 270px; }
  .move { width: 124px; }
  .tags { width: 154px; }
  .editing { width: 134px; }
  .zoom { width: 51px; }

  .large {
    width: 44px;
    display: block;
    align-self: flex-start;
    flex: none;
    line-height: 13px;
    white-space: nowrap;
  }

  .large.wide {
    width: 56px;
  }

  .icon32 {
    width: 32px;
    height: 32px;
    margin: 0 auto 4px;
  }

  .icon16 {
    width: 16px;
    height: 16px;
    margin-right: 4px;
  }

  .small {
    display: flex;
    align-items: center;
    height: 20px;
    white-space: nowrap;
  }

  .caret {
    display: inline-block;
    width: 5px;
    height: 3px;
    margin-left: 4px;
    vertical-align: middle;
  }

  .large .caret {
    margin-left: 0;
  }

  .stack {
    display: flex;
    flex-direction: column;
    gap: 2px;
  }

  .two {
    padding-top: 7px;
    gap: 9px;
  }

  .delete .tools {
    justify-content: space-between;
    padding: 4px 3px 0 6px;
  }

  .respond .tools,
  .move .tools,
  .editing .tools,
  .zoom .tools {
    padding-left: 3px;
  }

  .respond .stack {
    margin-left: 5px;
  }

  .move .tools {
    justify-content: space-between;
  }

  .tags .tools {
    gap: 2px;
    padding-left: 4px;
  }

  .gallery {
    flex: 1;
    display: flex;
    height: 60px;
    box-sizing: border-box;
    border: 1px solid #c9cdd3;
    background: #fff;
  }

  .gallery-items {
    flex: 1;
    display: grid;
    grid-template-columns: 1fr 1fr;
    grid-auto-rows: 20px;
    padding-left: 2px;
  }

  .gallery .icon16 {
    margin-right: 6px;
  }

  .gallery-scroll {
    width: 14px;
    display: grid;
    grid-template-rows: repeat(3, 1fr);
    border-left: 1px solid #dfe2e6;
  }

  .gallery-scroll button {
    display: grid;
    place-items: center;
    border-bottom: 1px solid #e3e5e8;
  }

  .gallery-scroll .expand {
    border: 0;
    outline: 1px solid #c0c4ca;
  }

  .launcher {
    position: absolute;
    right: 5px;
    bottom: 3px;
  }

  .envelope-info {
    display: flex;
    justify-content: space-between;
    padding: 8px 8px 1px 6px;
    line-height: 17px;
  }

  dl {
    display: grid;
    grid-template-columns: 77px auto;
    grid-auto-rows: 17px;
  }

  .envelope-info p {
    display: flex;
    gap: 12px;
  }

  .reader {
    flex: 1;
    min-height: 0;
    display: flex;
    margin: 0 6px;
    border: 1px solid #a5acb8;
    background: #fff;
  }

  .message {
    flex: 1;
    padding: 15px 10px 0;
    overflow: hidden;
    color: #1f497d;
    line-height: 18px;
  }

  .calibri {
    font-family: 'Open Sans', 'Noto Sans', sans-serif;
    font-size: 13px;
  }

  .calibri p,
  .arial p {
    margin-bottom: 18px;
  }

  .quoted {
    margin-bottom: 18px;
    padding-top: 5px;
    border-top: 1px solid #b5c4df;
    background: linear-gradient(#f9fafc, #fff);
    color: #000;
    font: 13px/16px 'DejaVu Sans Condensed', 'Open Sans', sans-serif;
  }

  .signature {
    margin: 53px 0 36px;
    color: #0f6db7;
    font: bold 15px/18px 'Liberation Sans', Arial, sans-serif;
  }

  .arial {
    font: 16px/18px 'Liberation Sans', Arial, sans-serif;
  }

  .message a {
    color: #00f;
  }

  .scrollbar {
    width: 16px;
    display: flex;
    flex-direction: column;
    align-items: stretch;
    background: #d9dde5;
  }

  .split {
    height: 2px;
    margin: 2px 4px;
    background: #69707e;
  }

  .ruler {
    height: 18px;
    display: grid;
    place-items: center;
  }

  .arrow {
    height: 17px;
    display: grid;
    place-items: center;
    border: 1px solid #a9afb9;
    border-radius: 1px;
    background: linear-gradient(90deg, #fdfdfe, #e5e8ee);
  }

  .track {
    flex: 1;
    background: linear-gradient(90deg, #ececef, #fbfbfc);
  }

  .thumb {
    height: 13%;
    box-sizing: border-box;
    border: 1px solid #a5abb5;
    border-radius: 2px;
    background:
      repeating-linear-gradient(#7c828e 0 1px, transparent 1px 2px) center / 8px 7px no-repeat,
      linear-gradient(90deg, #fafbfc, #e1e4e9);
  }

  .splitter {
    height: 3px;
    margin: 7px 6px 0;
    border: 1px solid #a5acb8;
    background: #eceef2;
  }

  .people {
    height: 35px;
    display: flex;
    align-items: center;
    gap: 13px;
    box-sizing: border-box;
    padding: 0 10px 2px 19px;
    background: #f1f2f4;
    color: #000;
  }

  .faces {
    flex: 1;
    display: flex;
    justify-content: flex-end;
    gap: 2px;
  }

  .faces button {
    border: 1px solid #777;
    background: linear-gradient(#c5c5c5, #ececec);
  }

  .people .plain {
    margin-left: 3px;
  }

  .taskbar {
    position: relative;
    height: 40px;
    display: flex;
    justify-content: space-between;
    box-sizing: border-box;
    border-top: 1px solid #18334e;
    overflow: hidden;
  }

  .wallpaper {
    position: absolute;
    inset: 0;
    width: 100%;
    height: 100%;
  }

  .apps,
  .tray {
    position: relative;
    display: flex;
    align-items: stretch;
  }

  .apps {
    gap: 3px;
  }

  .start {
    width: 56px;
    display: grid;
    place-items: center;
  }

  .task {
    width: 59px;
    display: grid;
    place-items: center;
    box-sizing: border-box;
  }

  .open {
    border: 1px solid #25506f;
    border-radius: 3px;
    background: linear-gradient(135deg, rgba(255, 255, 255, 0.5), rgba(255, 255, 255, 0.15));
    box-shadow: inset 0 0 0 1px rgba(255, 255, 255, 0.5);
  }

  .active {
    width: 60px;
    padding-right: 6px;
    background: linear-gradient(90deg, rgba(255, 255, 255, 0.8), rgba(255, 255, 255, 0.45) 53px, #376c8e 53px, #376c8e 54px, rgba(255, 255, 255, 0.4) 54px);
  }

  .tray {
    gap: 8px;
    align-items: center;
    color: #fff;
  }

  .hidden-icons {
    margin-right: 4px;
  }

  .clock {
    margin-left: 6px;
    font-size: 12px;
    line-height: 17px;
  }

  .show-desktop {
    align-self: stretch;
    width: 14px;
    margin-left: 2px;
    border: 1px solid #6a89aa;
    background: linear-gradient(135deg, rgba(255, 255, 255, 0.3), rgba(255, 255, 255, 0.05));
  }
</style>
